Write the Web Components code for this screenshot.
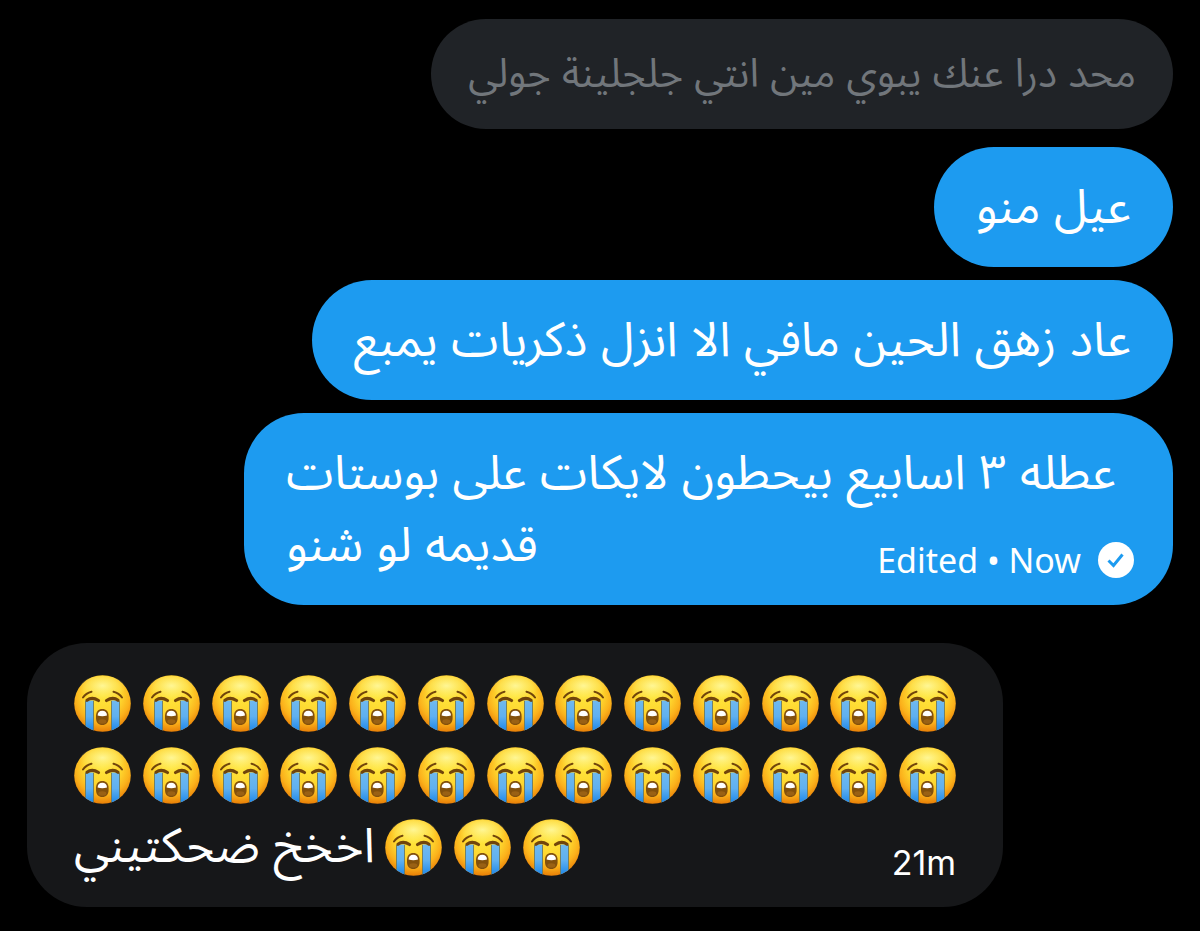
<!DOCTYPE html>
<html lang="ar">
<head>
<meta charset="utf-8">
<meta name="viewport" content="width=device-width, initial-scale=1">
<title>Messages</title>
<style>
  html { background: #000; }
  body { margin: 0; font-family: Inter, "Noto Sans Arabic", "DejaVu Sans", sans-serif; }
</style>
</head>
<body>
<chat-thread>
  <chat-bubble kind="quote">محد درا عنك يبوي مين انتي جلجلينة جولي</chat-bubble>
  <chat-bubble kind="sent">عيل منو</chat-bubble>
  <chat-bubble kind="sent">عاد زهق الحين مافي الا انزل ذكريات يمبع</chat-bubble>
  <chat-bubble kind="sent" status>
    <text-line>عطله ٣ اسابيع بيحطون لايكات على بوستات</text-line>
    <text-line>قديمه لو شنو</text-line>
    <message-status slot="meta" sent>Edited • Now</message-status>
  </chat-bubble>
  <chat-bubble kind="received">
    <emoji-row count="13"></emoji-row>
    <emoji-row count="13"></emoji-row>
    <emoji-row count="3">اخخخ ضحكتيني</emoji-row>
    <message-status slot="meta">21m</message-status>
  </chat-bubble>
</chat-thread>

<template id="face">
  <svg viewBox="0 0 57 57" role="img" aria-label="😭">
    <defs>
      <radialGradient id="skin" cx=".5" cy=".36" r=".66">
        <stop offset="0" stop-color="#ffe63c"/><stop offset=".5" stop-color="#fed52e"/>
        <stop offset=".74" stop-color="#fbb11b"/><stop offset="1" stop-color="#e57804"/>
      </radialGradient>
      <radialGradient id="shine" cx=".5" cy=".35" r=".5">
        <stop offset="0" stop-color="#fff9a0" stop-opacity=".9"/><stop offset="1" stop-color="#fff27a" stop-opacity="0"/>
      </radialGradient>
      <linearGradient id="tear" x2="0" y2="1">
        <stop offset="0" stop-color="#6fb9ee"/><stop offset=".5" stop-color="#5fb0f0"/><stop offset="1" stop-color="#1683e8"/>
      </linearGradient>
      <clipPath id="head"><circle cx="28.500" cy="28.500" r="28.300"/></clipPath>
    </defs>
    <circle cx="28.500" cy="28.500" r="28.300" fill="url(#skin)"/>
    <ellipse cx="28.500" cy="15" rx="24" ry="14" fill="url(#shine)"/>
    <g clip-path="url(#head)">
      <path d="M11.500 25.500h8v32h-8zM37.500 25.500h8v32h-8z" fill="url(#tear)"/>
      <path d="M11.500 26v31M19.500 26v31M37.500 26v31M45.500 26v31" stroke="#6b7b62" stroke-width=".9"/>
    </g>
    <g fill="none" stroke="#71450b" stroke-linecap="round">
      <path d="M9 22.500Q12 18 17.500 16.700M48 22.500Q45 18 39.500 16.700" stroke-width="2"/>
      <path d="M13 25.300Q18 21.500 24.500 25.500M44 25.300Q39 21.500 32.500 25.500" stroke-width="3.200"/>
    </g>
    <path d="M22 41C22 36.500 24.500 34 28.300 34S34.600 36.500 34.600 41V43C34.600 47.500 32 50 28.300 50S22 47.500 22 43Z" fill="#82500c"/>
    <path d="M23.600 40.500C23.600 37.500 25.500 35.700 28.300 35.700S33 37.500 33 40.500Q28.300 41.800 23.600 40.500Z" fill="#fff"/>
    <ellipse cx="28.300" cy="46.500" rx="4" ry="2.200" fill="#9a6114"/>
  </svg>
</template>

<script>
class ChatThread extends HTMLElement {
  constructor() {
    super();
    this.attachShadow({ mode: 'open' }).innerHTML = `
      <style>
        :host { display: flex; flex-direction: column; gap: 13px; padding: 19px 27px 24px; }
        ::slotted([kind="quote"]) { margin-bottom: 5px; }
        ::slotted([kind="received"]) { margin-top: 25px; }
      </style>
      <slot></slot>`;
  }
}

class ChatBubble extends HTMLElement {
  constructor() {
    super();
    this.attachShadow({ mode: 'open' }).innerHTML = `
      <style>
        :host {
          display: grid; box-sizing: border-box; max-width: 100%;
          align-self: flex-end; padding: 23px 42px 25px; border-radius: 60px;
          background: #1d9bf0; color: #fff; font-size: 48px; line-height: 72px;
        }
        :host([kind="quote"]) {
          padding: 18px 37px 20px; background: #202327; color: #71767b;
          font-size: 40px;
        }
        :host([kind="received"]) {
          align-self: flex-start; background: #161719; padding: 24px 47px;
          width: 100%; max-width: 976px;
        }
        :host([status]) { padding-right: 57px; }
        .text, .meta { grid-area: 1 / 1; min-width: 0; }
        .meta { align-self: end; justify-self: end; }
        :host([status]) .meta { margin-right: -18px; }
      </style>
      <div class="text"><bdi><slot></slot></bdi></div>
      <div class="meta"><slot name="meta"></slot></div>`;
  }
}

class TextLine extends HTMLElement {
  constructor() {
    super();
    this.attachShadow({ mode: 'open' }).innerHTML = `
      <style>:host { display: block; text-align: left; }</style>
      <bdi><slot></slot></bdi>`;
  }
}

class EmojiRow extends HTMLElement {
  constructor() {
    super();
    this.attachShadow({ mode: 'open' }).innerHTML = `
      <style>
        :host { display: flex; flex-direction: row-reverse; justify-content: space-between; align-items: center; height: 72px; direction: ltr; }
        :host([count="3"]) { justify-content: flex-end; gap: 12px; }
        svg { width: 57px; height: 57px; flex: none; }
        bdi { margin: 0 -2px 4px 0; white-space: nowrap; }
      </style>`;
    const face = document.getElementById('face');
    for (let i = 0; i < Number(this.getAttribute('count')); i++) {
      this.shadowRoot.append(face.content.cloneNode(true));
    }
    if (this.textContent.trim()) {
      const text = document.createElement('bdi');
      text.append(document.createElement('slot'));
      this.shadowRoot.append(text);
    }
  }
}

class MessageStatus extends HTMLElement {
  constructor() {
    super();
    const tick = `
      <svg viewBox="0 0 36 36" role="img" aria-label="Sent">
        <circle cx="18" cy="18" r="18" fill="#fff"/>
        <path d="M10.500 18.500l5 5 9-11" fill="none" stroke="#1d9bf0" stroke-width="3"/>
      </svg>`;
    this.attachShadow({ mode: 'open' }).innerHTML = `
      <style>
        :host { display: flex; align-items: center; gap: 17px; direction: ltr; font: 34px/40px "Noto Sans", sans-serif; }
        :host(:not([sent])) { font-family: Inter, sans-serif; }
        svg { width: 36px; height: 36px; }
      </style>
      <span><slot></slot></span>${this.hasAttribute('sent') ? tick : ''}`;
  }
}

customElements.define('chat-thread', ChatThread);
customElements.define('chat-bubble', ChatBubble);
customElements.define('text-line', TextLine);
customElements.define('emoji-row', EmojiRow);
customElements.define('message-status', MessageStatus);
</script>
</body>
</html>
